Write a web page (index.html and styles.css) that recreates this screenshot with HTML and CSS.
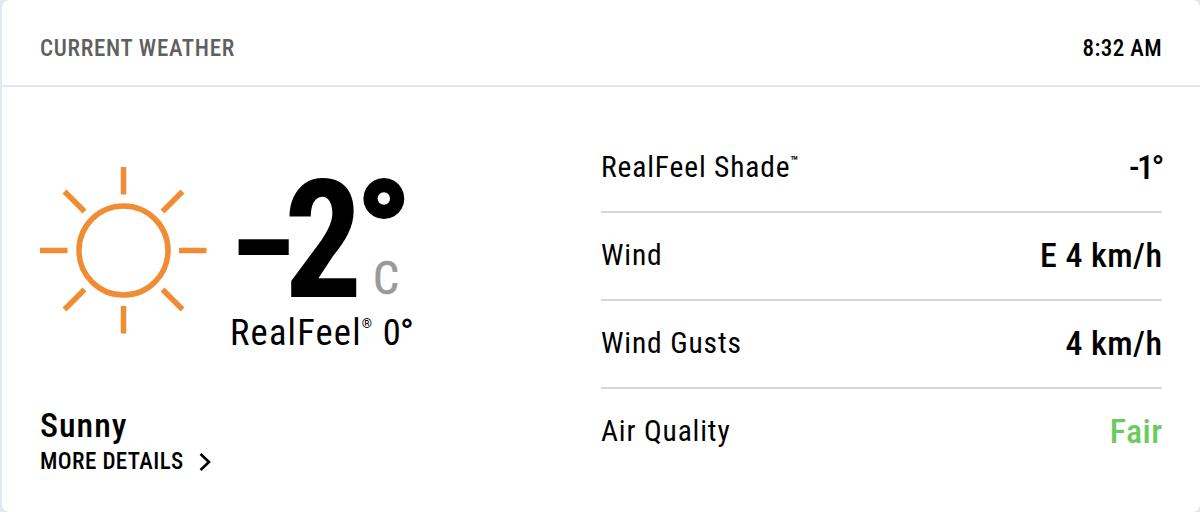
FILE: index.html
```html
<!DOCTYPE html>
<html lang="en">
<head>
  <meta charset="UTF-8">
  <meta name="viewport" content="width=device-width, initial-scale=1.0">
  <title>Current Weather</title>
  <link rel="stylesheet" href="styles.css">
</head>
<body>
  <div class="card">
    <div class="card-header">
      <h2 class="title">CURRENT WEATHER</h2>
      <p class="time">8:32 AM</p>
    </div>
    <div class="card-content">
      <div class="left-panel">
        <div class="forecast">
          <svg class="weather-icon" viewBox="0 0 168 168" fill="none" stroke="#f08c34" stroke-width="5.5">
            <circle cx="83.5" cy="83.5" r="44.5"/>
            <path d="M83.500 0v27.500M83.500 139v27.500M0 83.500h27.500M139 83.500h27.500M24.500 24.500l20 20M122.500 122.500l20 20M142.500 24.500l-20 20M44.500 122.500l-20 20"/>
          </svg>
          <div class="temp-container">
            <div class="temp">
              <span class="minus">–</span>
              <span class="number">2</span>
              <div class="degree-unit">
                <span class="degree">°</span>
                <span class="unit">C</span>
              </div>
            </div>
            <div class="real-feel">RealFeel<sup class="mark">®</sup> 0<span class="small-degree">°</span></div>
          </div>
        </div>
        <div class="phrase">Sunny</div>
        <a class="details"><span>MORE DETAILS</span>
          <svg class="chevron" viewBox="0 0 12 20" fill="none" stroke="#000" stroke-width="2.6"><path d="M1.500 2l8.500 8-8.500 8"/></svg>
        </a>
      </div>
      <div class="right-panel">
        <div class="item"><span class="label">RealFeel Shade<sup class="trademark">™</sup></span><span class="value cold">-1°</span></div>
        <div class="item"><span class="label">Wind</span><span class="value">E 4 km/h</span></div>
        <div class="item"><span class="label">Wind Gusts</span><span class="value">4 km/h</span></div>
        <div class="item"><span class="label">Air Quality</span><span class="value fair">Fair</span></div>
      </div>
    </div>
  </div>
</body>
</html>
```
FILE: styles.css
```css
body {
  margin: 0;
  background-color: #e1e8f0;
  font-family: Roboto, sans-serif;
  font-stretch: 75%;
  color: #000;
}
.card {
  box-sizing: border-box;
  height: 512px;
  margin-left: 2px;
  border-radius: 8px;
  background-color: #fff;
  overflow: hidden;
}
.card-header {
  display: flex;
  justify-content: space-between;
  align-items: center;
  height: 87px;
  padding: 12px 38px 0;
  box-sizing: border-box;
  border-bottom: 2px solid #e3e6ef;
}
.title, .time {
  margin: 0;
  font-size: 23px;
  font-weight: 500;
}
.title {
  color: #606060;
  letter-spacing: 0.7px;
}
.time {
  letter-spacing: 0.4px;
}
.card-content {
  display: flex;
}
.left-panel {
  width: 599px;
  padding: 80px 0 0 38px;
  box-sizing: border-box;
}
.forecast {
  display: flex;
  height: 240px;
}
.weather-icon {
  width: 168px;
  height: 168px;
}
.temp-container {
  padding-left: 22px;
}
.temp {
  display: flex;
  height: 143px;
  white-space: nowrap;
}
.minus {
  width: 54px;
  font-size: 138px;
  line-height: 163px;
  font-weight: 700;
  transform: scaleX(0.85);
  transform-origin: 0 0;
}
.number {
  width: 73px;
  font-size: 165px;
  line-height: 147px;
  font-weight: 700;
  transform: scaleX(0.94);
  transform-origin: 0 0;
}
.degree-unit {
  display: flex;
  flex-direction: column;
}
.degree {
  height: 83px;
  font-size: 136px;
  line-height: 130px;
  font-weight: 900;
  -webkit-text-stroke: 4px #000;
}
.unit {
  padding-left: 16px;
  font-size: 46px;
  line-height: 56px;
  color: #999;
  -webkit-text-stroke: 0.6px #999;
}
.real-feel {
  font-size: 36.5px;
  line-height: 46px;
  letter-spacing: 1.2px;
}
.mark {
  font-size: 13px;
  font-weight: 500;
  line-height: 0;
  vertical-align: 17px;
}
.small-degree {
  font-weight: 500;
  margin-left: -2px;
}
.phrase {
  font-size: 34px;
  line-height: 36px;
  font-weight: 500;
  letter-spacing: 1px;
}
.details {
  display: flex;
  align-items: center;
  gap: 15px;
  font-size: 23px;
  line-height: 37px;
  font-weight: 500;
  letter-spacing: 0.4px;
}
.chevron {
  width: 12px;
  height: 20px;
}
.right-panel {
  width: 561px;
  padding-top: 38px;
}
.item {
  display: flex;
  justify-content: space-between;
  align-items: center;
  height: 84px;
  padding-bottom: 2px;
  border-bottom: 2px solid #d8d8d8;
}
.item:last-child {
  border-bottom: 0;
}
.label {
  font-size: 29.5px;
  letter-spacing: 0.85px;
}
.trademark {
  font-size: 14px;
  font-weight: 600;
  line-height: 0;
  letter-spacing: 0;
  vertical-align: 11px;
}
.value {
  font-size: 34px;
  font-weight: 500;
  letter-spacing: 0.4px;
  margin-right: -0.4px;
}
.cold {
  letter-spacing: -2.5px;
  margin-right: 0;
}
.fair {
  color: #6ccb60;
}
```
